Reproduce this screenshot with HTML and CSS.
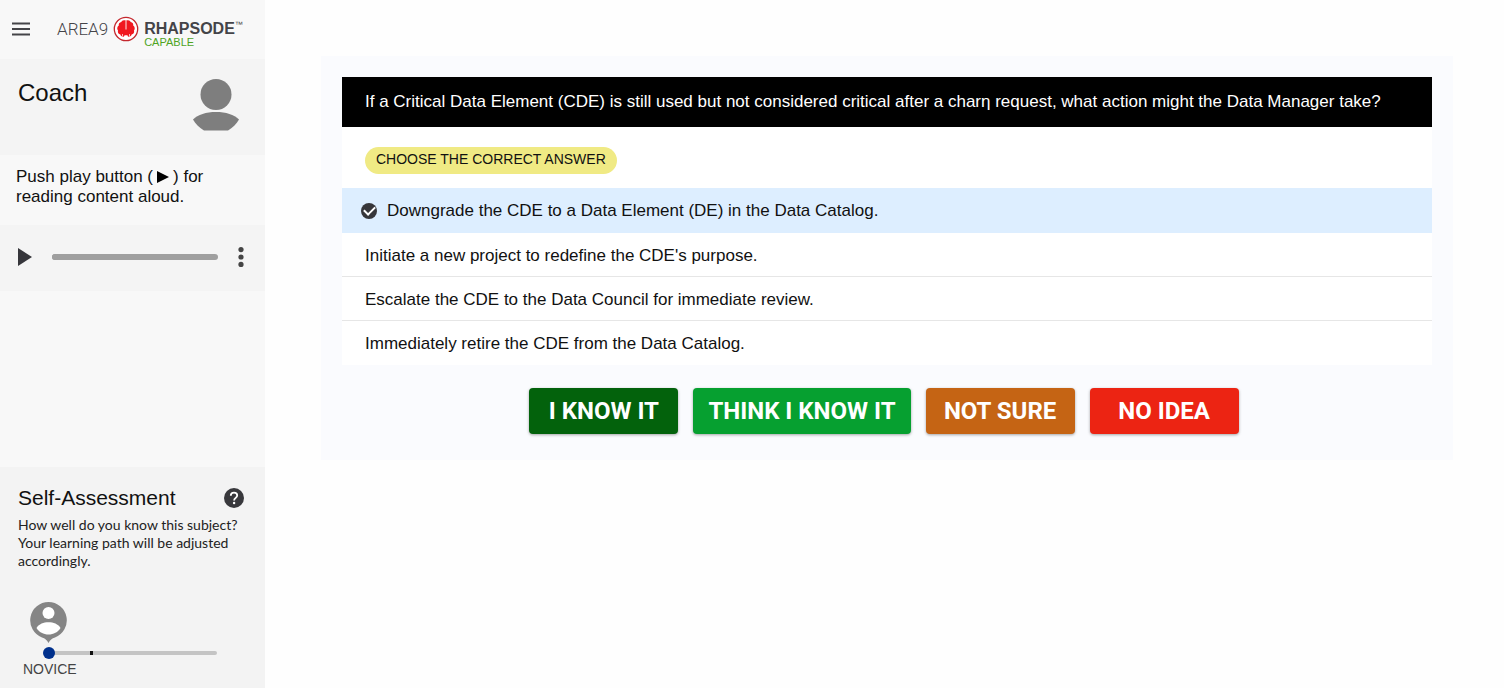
FILE: index.html
```html
<!DOCTYPE html>
<html lang="en">
<head>
    <meta charset="UTF-8">
    <meta name="viewport" content="width=device-width, initial-scale=1.0">
    <link rel="stylesheet" href="styles.css">
    <title>Area9 Rhapsode</title>
</head>
<body>

    <aside class="sidebar">
        <header class="topbar">
            <button type="button" class="icon-button" aria-label="Menu">
                <svg width="18" height="14" viewBox="0 0 18 14"><path d="M0 1.5h18M0 7h18M0 12.5h18" stroke="#444448" stroke-width="2"/></svg>
            </button>
            <div class="logo">
                <span class="logo-area">AREA9</span>
                <svg width="26" height="26" viewBox="0 0 26 26">
                    <circle cx="13" cy="13" r="11.7" fill="#fff" stroke="#c4272d" stroke-width="1.3"/>
                    <path d="M12.4 4.6C10.6 3.6 8.800 4.600 8.400 6 6.200 6.200 5.400 8.200 5.800 9.600 4 10.800 3.800 13.200 5 14.600 4.400 16.600 5.600 18.400 7.400 18.600 7.800 20.600 9.800 21.200 11 20.400L11.600 19.200h2.800L15 20.400c1.200.8 3.200.2 3.600-1.800 1.800-.2 3-2 2.400-4 1.200-1.400 1-3.800-.8-5 .4-1.400-.4-3.400-2.600-3.600-.4-1.400-2.200-2.400-4-1.400z" fill="#f01820"/>
                    <path d="M13 4.500v9" stroke="#fff" stroke-width="0.9"/>
                    <path d="M9.500 20.500v-2.500M16.500 20.500v-2.500" stroke="#fff" stroke-width="0.7"/>
                </svg>
                <div class="logo-product">
                    <span class="logo-name">RHAPSODE<sup>™</sup></span>
                    <span class="logo-edition">CAPABLE</span>
                </div>
            </div>
        </header>

        <section class="coach">
            <h2>Coach</h2>
            <svg width="46" height="52" viewBox="0 0 46 52" fill="#7e7e7e">
                <circle cx="23" cy="15.500" r="15.500"/>
                <path d="M0 40.500C5 35.500 13 33 23 33s18 2.500 23 7.500c-2.500 4.500-6.500 8.500-11 11H11C6.500 49 2.500 45 0 40.500z"/>
            </svg>
        </section>

        <div class="hint">
            <div class="hint-line">
                <span>Push play button (</span>
                <svg width="12" height="12" viewBox="0 0 12 12"><path d="M0 0l12 6-12 6z"/></svg>
                <span>) for</span>
            </div>
            <div>reading content aloud.</div>
        </div>

        <section class="player">
            <button type="button" class="icon-button" aria-label="Play">
                <svg width="14" height="18" viewBox="0 0 14 18"><path d="M0 0l14 9-14 9z" fill="#36363b"/></svg>
            </button>
            <input type="range" class="seek" min="0" max="100" value="0" aria-label="Playback position">
            <button type="button" class="icon-button" aria-label="More options">
                <svg width="6" height="20" viewBox="0 0 6 20" fill="#444"><circle cx="3" cy="2.600" r="2.600"/><circle cx="3" cy="10" r="2.600"/><circle cx="3" cy="17.400" r="2.600"/></svg>
            </button>
        </section>

        <section class="assessment">
            <div class="assessment-title">
                <h2>Self-Assessment</h2>
                <button type="button" class="icon-button" aria-label="Help">
                    <svg width="20" height="20" viewBox="0 0 20 20">
                        <circle cx="10" cy="10" r="10" fill="#38383c"/>
                        <path d="M6.800 7.800C6.800 5.800 8.200 4.700 10 4.700s3.200 1.100 3.200 2.800c0 2.200-3.100 2.500-3.100 4.900" fill="none" stroke="#fff" stroke-width="1.800"/>
                        <circle cx="10.100" cy="15" r="1.200" fill="#fff"/>
                    </svg>
                </button>
            </div>
            <p>How well do you know this subject? Your learning path will be adjusted accordingly.</p>
            <div class="level">
                <svg class="pin" width="37" height="41" viewBox="0 0 37 41">
                    <path d="M18.500 0a18.300 18.300 0 0 0-6.500 35.400c3 1 5 2.500 6.500 5.600 1.500-3.100 3.500-4.600 6.500-5.600A18.300 18.300 0 0 0 18.500 0z" fill="#858585"/>
                    <circle cx="18.500" cy="11" r="6" fill="#fff"/>
                    <path d="M6.500 26C9 22 13.500 20.300 18.500 20.300S28 22 30.500 26c-2.500 4.200-7 6.500-12 6.500S9 30.200 6.500 26z" fill="#fff"/>
                </svg>
                <input type="range" class="level-range" id="level" min="0" max="4" value="0">
                <label for="level">NOVICE</label>
            </div>
        </section>
    </aside>

    <main class="content">
        <form class="panel">
            <div class="card">
                <h1 class="question">If a Critical Data Element (CDE) is still used but not considered critical after a charη request, what action might the Data Manager take?</h1>
                <div class="tag">CHOOSE THE CORRECT ANSWER</div>
                <div class="options">
                    <label class="option"><input type="radio" name="answer" checked>Downgrade the CDE to a Data Element (DE) in the Data Catalog.</label>
                    <label class="option"><input type="radio" name="answer">Initiate a new project to redefine the CDE's purpose.</label>
                    <label class="option"><input type="radio" name="answer">Escalate the CDE to the Data Council for immediate review.</label>
                    <label class="option"><input type="radio" name="answer">Immediately retire the CDE from the Data Catalog.</label>
                </div>
            </div>
            <div class="buttons">
                <button type="button" class="answer-button know">I KNOW IT</button>
                <button type="button" class="answer-button think">THINK I KNOW IT</button>
                <button type="button" class="answer-button unsure">NOT SURE</button>
                <button type="button" class="answer-button no-idea">NO IDEA</button>
            </div>
        </form>
    </main>

</body>
</html>
```

FILE: styles.css
```css
* {
    box-sizing: border-box;
}

body {
    margin: 0;
    min-height: 100vh;
    display: flex;
    font-family: "Liberation Sans", Arial, sans-serif;
    color: #111;
    background-color: #fefefe;
}

h1, h2, p {
    margin: 0;
    font-weight: normal;
}

svg {
    display: block;
    flex-shrink: 0;
}

.icon-button {
    padding: 0;
    border: none;
    background: none;
    cursor: pointer;
}

/* Sidebar */
.sidebar {
    width: 265px;
    flex-shrink: 0;
    display: flex;
    flex-direction: column;
    background-color: #f8f8f8;
}

.topbar {
    height: 59px;
    padding: 0 12px 2px;
    display: flex;
    align-items: center;
    gap: 27px;
}

.logo {
    display: flex;
    align-items: center;
    gap: 5px;
    color: #444448;
}

.logo-area {
    font-family: Roboto, sans-serif;
    font-size: 17px;
    font-weight: 300;
}

.logo-product {
    display: flex;
    flex-direction: column;
    padding-top: 10px;
}

.logo-name {
    font-size: 16px;
    line-height: 16px;
    font-weight: 700;
    white-space: nowrap;
}

.logo-name sup {
    font-size: 8px;
    line-height: 8px;
    font-weight: 400;
    vertical-align: top;
}

.logo-edition {
    font-size: 11px;
    line-height: 10px;
    color: #4fa41e;
}

.coach {
    height: 96px;
    padding: 20px 26px 0 18px;
    display: flex;
    justify-content: space-between;
    align-items: flex-start;
    background-color: #f4f4f4;
}

h2 {
    font-size: 24px;
    line-height: 28px;
}

.hint {
    height: 70px;
    padding: 12px 16px 0;
    font-size: 17px;
    line-height: 20px;
}

.hint-line {
    display: flex;
    align-items: center;
    gap: 4px;
}

.player {
    height: 66px;
    padding: 0 21px 2px 18px;
    display: flex;
    align-items: center;
    gap: 20px;
    background-color: #f4f4f4;
}

input[type="range"] {
    appearance: none;
    min-width: 0;
    margin: 0;
    background: none;
}

.seek {
    flex: 1;
    height: 6px;
}

.seek::-webkit-slider-runnable-track {
    height: 6px;
    border-radius: 3px;
    background-color: #9f9f9f;
}

.seek::-webkit-slider-thumb {
    appearance: none;
    width: 6px;
    height: 6px;
    border-radius: 50%;
    background-color: #9f9f9f;
}

.assessment {
    margin-top: auto;
    padding: 17px 18px 12px;
    background-color: #f3f3f3;
}

.assessment-title {
    display: flex;
    justify-content: space-between;
    align-items: center;
    padding-right: 3px;
}

.assessment-title h2 {
    font-size: 21px;
}

.assessment p {
    margin-top: 4px;
    font-family: Lato, sans-serif;
    font-size: 14px;
    line-height: 18px;
    color: #222;
}

.level {
    margin-top: 32px;
    padding: 0 30px 0 5px;
    display: flex;
    flex-direction: column;
    align-items: flex-start;
}

.pin {
    margin: 0 0 1px 7px;
}

.level-range {
    align-self: stretch;
    height: 18px;
    padding-left: 20px;
}

.level-range::-webkit-slider-runnable-track {
    height: 4px;
    border-radius: 2px;
    background: linear-gradient(to right, transparent 6px, #c4c4c4 6px, #c4c4c4 47px, #111 47px, #111 50px, #c4c4c4 50px);
}

.level-range::-webkit-slider-thumb {
    appearance: none;
    width: 12px;
    height: 12px;
    margin-top: -4px;
    border-radius: 50%;
    background-color: #00308c;
}

.level label {
    font-size: 14px;
    line-height: 14px;
    color: #444;
}

/* Question */
.content {
    flex: 1;
    min-width: 0;
    padding: 56px 51px 56px 56px;
}

.panel {
    padding: 21px 21px 26px;
    background-color: #fafbfe;
}

.card {
    background-color: #fff;
}

.question {
    padding: 14px 23px 15px;
    font-size: 17px;
    line-height: 21px;
    color: #fff;
    background-color: #000;
}

.tag {
    width: fit-content;
    margin: 20px 23px 14px;
    padding: 0 11px 2px;
    border-radius: 14px;
    font-size: 14px;
    line-height: 25px;
    background-color: #f0ea84;
}

.option {
    min-height: 44px;
    padding: 11px 23px 10px;
    display: flex;
    align-items: center;
    font-size: 17px;
    line-height: 21px;
    border-bottom: 1px solid #e6e6e6;
    cursor: pointer;
}

.option:last-child {
    border-bottom: none;
}

.option input {
    appearance: none;
    width: 0;
    height: 16px;
    margin: 0;
    border-radius: 50%;
}

.option:has(input:checked) {
    min-height: 45px;
    padding-left: 19px;
    border-color: #ddeeff;
    background-color: #ddeeff;
}

.option input:checked {
    width: 16px;
    margin-right: 10px;
    display: grid;
    place-items: center;
    background-color: #36363a;
}

/* Tick mark */
.option input:checked::before {
    content: "";
    width: 9px;
    height: 5px;
    margin-bottom: 2px;
    border-left: 2px solid #fff;
    border-bottom: 2px solid #fff;
    transform: rotate(-45deg);
}

.buttons {
    margin-top: 23px;
    padding-right: 6px;
    display: flex;
    flex-wrap: wrap;
    justify-content: center;
    gap: 15px;
}

.answer-button {
    min-width: 149px;
    height: 46px;
    padding: 0 15px;
    border: none;
    border-radius: 4px;
    font-family: Roboto, sans-serif;
    font-size: 24px;
    font-weight: 700;
    color: #fff;
    box-shadow: 0 1px 3px rgba(0, 0, 0, 0.35);
    cursor: pointer;
}

.know {
    background-color: #03620c;
}

.think {
    background-color: #06a030;
}

.unsure {
    background-color: #c56414;
}

.no-idea {
    background-color: #ec2413;
}
```
